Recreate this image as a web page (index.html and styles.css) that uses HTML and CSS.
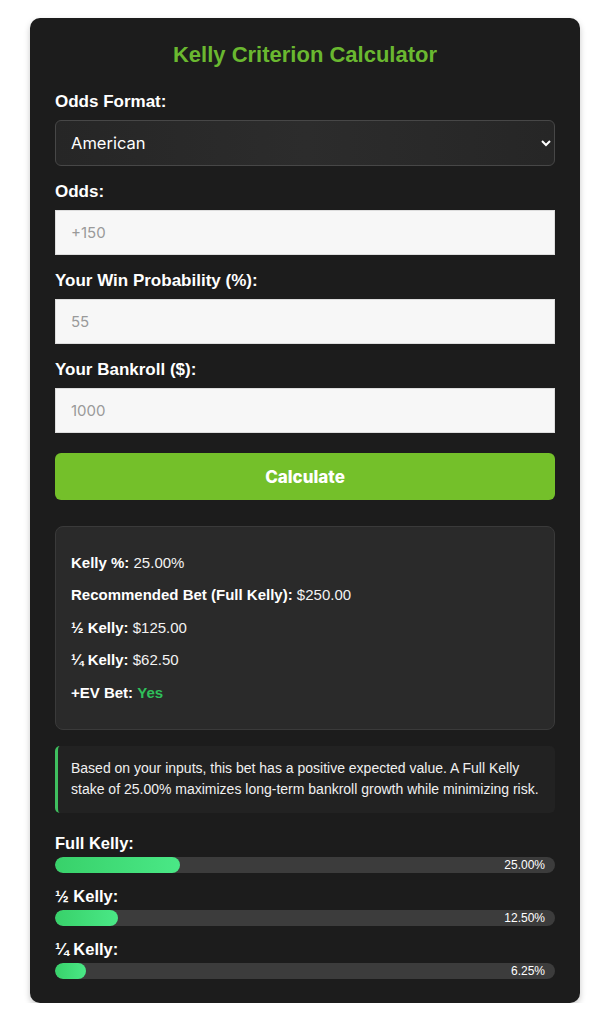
FILE: index.html
```html
<!DOCTYPE html>
<html lang="en">
<head>
<meta charset="utf-8">
<title>Kelly Criterion Calculator</title>
<link rel="stylesheet" href="styles.css">
</head>
<body>
<div class="card">
  <h2 class="title">Kelly Criterion Calculator</h2>

  <div class="field">
    <label class="label" for="fmt">Odds Format:</label>
    <select id="fmt" class="select">
      <option>American</option>
      <option>Decimal</option>
      <option>Fractional</option>
    </select>
  </div>

  <div class="field">
    <label class="label" for="odds">Odds:</label>
    <input id="odds" class="input" type="text" placeholder="+150">
  </div>

  <div class="field">
    <label class="label" for="prob">Your Win Probability (%):</label>
    <input id="prob" class="input" type="text" placeholder="55">
  </div>

  <div class="field">
    <label class="label" for="bank">Your Bankroll ($):</label>
    <input id="bank" class="input" type="text" placeholder="1000">
  </div>

  <button class="btn" type="button">Calculate</button>

  <div class="results">
    <p class="row"><strong>Kelly %:</strong> 25.00%</p>
    <p class="row"><strong>Recommended Bet (Full Kelly):</strong> $250.00</p>
    <p class="row"><strong>½ Kelly:</strong> $125.00</p>
    <p class="row"><strong>¼ Kelly:</strong> $62.50</p>
    <p class="row"><strong>+EV Bet:</strong> <span class="yes">Yes</span></p>
  </div>

  <div class="note">Based on your inputs, this bet has a positive expected value. A Full Kelly stake of 25.00% maximizes long-term bankroll growth while minimizing risk.</div>

  <div class="bars">
    <div class="bar-group">
      <div class="bar-label">Full Kelly:</div>
      <div class="bar"><div class="fill" style="width:25%"></div><span class="bar-text">25.00%</span></div>
    </div>
    <div class="bar-group">
      <div class="bar-label">½ Kelly:</div>
      <div class="bar"><div class="fill" style="width:12.5%"></div><span class="bar-text">12.50%</span></div>
    </div>
    <div class="bar-group">
      <div class="bar-label">¼ Kelly:</div>
      <div class="bar"><div class="fill" style="width:6.25%"></div><span class="bar-text">6.25%</span></div>
    </div>
  </div>
</div>
</body>
</html>
```

FILE: styles.css
```css
* { box-sizing: border-box; }

body {
  margin: 0;
  background: #ffffff;
  font-family: "Liberation Sans", Arial, sans-serif;
  color: #ffffff;
}

.card {
  width: 550px;
  margin: 18px 0 0 30px;
  background: #1c1c1c;
  border-radius: 10px;
  padding: 24px 25px 24px;
  box-shadow: 0 3px 6px rgba(0, 0, 0, 0.22);
}

.title {
  margin: 0 0 24px;
  text-align: center;
  font-size: 22px;
  line-height: 26px;
  font-weight: bold;
  color: #6ab830;
}

.field {
  display: flex;
  flex-direction: column;
  gap: 9px;
  margin-bottom: 16px;
}

.label {
  font-size: 17px;
  line-height: 19px;
  font-weight: bold;
  color: #ffffff;
}

.select {
  height: 46px;
  width: 100%;
  padding: 0 10px 0 11px;
  background: linear-gradient(90deg, #262626, #2c2c2c 50%, #262626);
  border: 1px solid #474747;
  border-radius: 6px;
  color: #ffffff;
  font-family: Inter, "Open Sans", sans-serif;
  font-size: 16.5px;
  color-scheme: dark;
}

.input {
  height: 45px;
  width: 100%;
  padding: 0 15px;
  background: #f7f7f7;
  border: 1px solid #dddddd;
  border-radius: 0;
  font-family: Inter, "Open Sans", sans-serif;
  font-size: 15px;
  color: #333333;
}

.input::placeholder { color: #9a9a9a; }

.btn {
  display: block;
  width: 100%;
  height: 47px;
  margin-top: 20px;
  background: #74c02a;
  border: none;
  border-radius: 6px;
  color: #ffffff;
  font-family: Inter, "Open Sans", sans-serif;
  font-weight: 800;
  font-size: 17px;
}

.results {
  margin-top: 26px;
  padding: 27px 15px;
  background: #2a2a2a;
  border: 1px solid #3a3a3a;
  border-radius: 8px;
  display: flex;
  flex-direction: column;
  gap: 14.4px;
}

.row {
  margin: 0;
  font-size: 15px;
  line-height: 18px;
  color: #f2f2f2;
}

.row strong { color: #ffffff; }

.yes { color: #2fbf5a; font-weight: bold; }

.note {
  margin-top: 16px;
  padding: 12px 15px 13px 13px;
  background: #222222;
  border-left: 3px solid #3fbf5f;
  border-radius: 5px;
  font-size: 14px;
  line-height: 21px;
  color: #f0f0f0;
}

.bars {
  margin-top: 21px;
  display: flex;
  flex-direction: column;
  gap: 14px;
}

.bar-group {
  display: flex;
  flex-direction: column;
  gap: 4px;
}

.bar-label {
  font-size: 16.5px;
  line-height: 19px;
  font-weight: bold;
}

.bar {
  position: relative;
  height: 16px;
  background: #3c3c3c;
  border-radius: 8px;
  overflow: hidden;
}

.fill {
  height: 100%;
  border-radius: 8px;
  background: linear-gradient(90deg, #38d16a, #4ae886);
}

.bar-text {
  position: absolute;
  right: 10px;
  top: 0;
  line-height: 16px;
  font-size: 12px;
  color: #ffffff;
}
```
